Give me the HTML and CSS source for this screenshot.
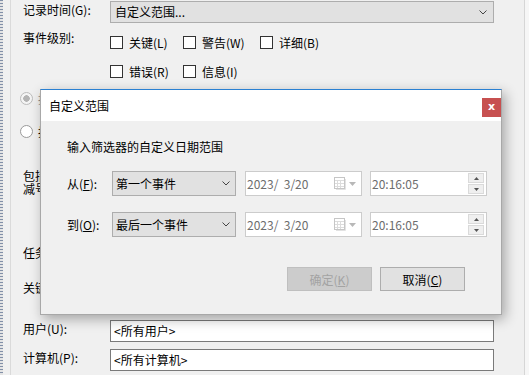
FILE: index.html
```html
<!DOCTYPE html>
<html lang="zh-CN">

<head>
    <meta charset="UTF-8">
    <title>筛选当前日志</title>
    <link rel="stylesheet" href="styles.css">
</head>

<body>
    <div class="screen">
        <div class="edge"></div>
        <div class="panel">
            <div class="field field-first">
                <span class="label">记录时间(G):</span>
                <div class="combo">
                    <span>自定义范围...</span>
                    <svg class="chevron" width="8" height="5" viewBox="0 0 8 5"><path d="M0.5 0.5L4 4L7.5 0.5" fill="none" stroke="#444"/></svg>
                </div>
            </div>

            <div class="field field-levels">
                <span class="label label-top">事件级别:</span>
                <div class="levels">
                    <label class="check"><span class="box"></span>关键(L)</label>
                    <label class="check"><span class="box"></span>警告(W)</label>
                    <label class="check"><span class="box"></span>详细(B)</label>
                    <label class="check"><span class="box"></span>错误(R)</label>
                    <label class="check"><span class="box"></span>信息(I)</label>
                </div>
            </div>

            <div class="radio-row radio-first"><span class="radio radio-off-state"></span>按日志(O)</div>
            <div class="radio-row radio-second"><span class="radio"></span>按源(S)</div>

            <p class="hint">包括/排除事件 ID: 输入 ID 号和/或 ID 范围，使用逗号分隔。若要排除条件，请先键入<br>减号。例如 1,3,5-99,-76</p>

            <div class="field field-task">
                <span class="label">任务类别(Y):</span>
                <div class="combo"><span></span></div>
            </div>
            <div class="field field-keyword">
                <span class="label">关键字(K):</span>
                <div class="combo"><span></span></div>
            </div>
            <div class="field field-user">
                <span class="label">用户(U):</span>
                <div class="textbox">&lt;所有用户&gt;</div>
            </div>
            <div class="field field-computer">
                <span class="label">计算机(P):</span>
                <div class="textbox">&lt;所有计算机&gt;</div>
            </div>
        </div>
        <div class="edge-right"></div>
    </div>

    <div class="dialog">
        <div class="dialog-title">
            <span>自定义范围</span>
            <div class="close">x</div>
        </div>
        <div class="dialog-body">
            <p class="intro">输入筛选器的自定义日期范围</p>

            <div class="range-row">
                <span class="range-label">从(<u>F</u>):</span>
                <div class="combo dlg-combo">
                    <span>第一个事件</span>
                    <svg class="chevron" width="8" height="5" viewBox="0 0 8 5"><path d="M0.5 0.5L4 4L7.5 0.5" fill="none" stroke="#444"/></svg>
                </div>
                <div class="picker date">
                    <span class="value">2023/  3/20</span>
                    <svg width="12" height="13" viewBox="0 0 12 13"><rect x="0.5" y="0.5" width="10" height="11" fill="#fff" stroke="#c6c6c6"/><path d="M1 3.5h9M1 6.5h9M1 9.5h9M3.5 4v7M6.5 4v7" stroke="#dcdcdc"/><path d="M11.5 2v10.5H2" fill="none" stroke="#e2e2e2"/></svg>
                    <svg class="drop" width="7" height="4" viewBox="0 0 7 4"><path d="M0 0h7L3.5 4z" fill="#b8b8b8"/></svg>
                </div>
                <div class="picker time">
                    <span class="value">20:16:05</span>
                    <div class="spin">
                        <div class="spin-btn"><svg width="5" height="3" viewBox="0 0 5 3"><path d="M0 3h5L2.5 0z" fill="#555"/></svg></div>
                        <div class="spin-btn"><svg width="5" height="3" viewBox="0 0 5 3"><path d="M0 0h5L2.5 3z" fill="#555"/></svg></div>
                    </div>
                </div>
            </div>

            <div class="range-row">
                <span class="range-label">到(<u>O</u>):</span>
                <div class="combo dlg-combo">
                    <span>最后一个事件</span>
                    <svg class="chevron" width="8" height="5" viewBox="0 0 8 5"><path d="M0.5 0.5L4 4L7.5 0.5" fill="none" stroke="#444"/></svg>
                </div>
                <div class="picker date">
                    <span class="value">2023/  3/20</span>
                    <svg width="12" height="13" viewBox="0 0 12 13"><rect x="0.5" y="0.5" width="10" height="11" fill="#fff" stroke="#c6c6c6"/><path d="M1 3.5h9M1 6.5h9M1 9.5h9M3.5 4v7M6.5 4v7" stroke="#dcdcdc"/><path d="M11.5 2v10.5H2" fill="none" stroke="#e2e2e2"/></svg>
                    <svg class="drop" width="7" height="4" viewBox="0 0 7 4"><path d="M0 0h7L3.5 4z" fill="#b8b8b8"/></svg>
                </div>
                <div class="picker time">
                    <span class="value">20:16:05</span>
                    <div class="spin">
                        <div class="spin-btn"><svg width="5" height="3" viewBox="0 0 5 3"><path d="M0 3h5L2.5 0z" fill="#555"/></svg></div>
                        <div class="spin-btn"><svg width="5" height="3" viewBox="0 0 5 3"><path d="M0 0h5L2.5 3z" fill="#555"/></svg></div>
                    </div>
                </div>
            </div>

            <div class="buttons">
                <button class="btn btn-disabled">确定(<u>K</u>)</button>
                <button class="btn">取消(<u>C</u>)</button>
            </div>
        </div>
    </div>
</body>

</html>
```

FILE: styles.css
```css
* {
    box-sizing: border-box;
}

body {
    margin: 0;
    width: 529px;
    height: 375px;
    overflow: hidden;
    background-color: #f0f0f0;
    font-family: "Noto Sans CJK SC", "Noto Sans", sans-serif;
    font-size: 12px;
    color: #000;
}

.screen {
    display: flex;
    height: 375px;
}

.edge {
    width: 3px;
    background: repeating-linear-gradient(to bottom, #8290a8 0 1px, #e4e4e4 1px 3px);
}

.panel {
    width: 515px;
    margin-left: 7px;
    padding: 1px 0 0 12px;
    border-left: 1px solid #dadada;
    border-right: 1px solid #d6d6d6;
    overflow: hidden;
}

.edge-right {
    flex: 1;
    background-color: #f6f6f6;
}

/* form rows behind the dialog */
.field {
    display: grid;
    grid-template-columns: 87px 384px;
    align-items: center;
}

.label {
    line-height: 16px;
    padding-bottom: 4px;
    white-space: nowrap;
}

.label-top {
    align-self: start;
    margin-top: -6px;
}

.combo {
    height: 22px;
    display: flex;
    align-items: center;
    justify-content: space-between;
    padding: 0 6px 0 4px;
    background-color: #e1e1e1;
    border: 1px solid #adadad;
    line-height: 16px;
}

.textbox {
    height: 22px;
    padding-left: 3px;
    line-height: 20px;
    background-color: #fff;
    border: 1px solid #7a7a7a;
}

.field-levels {
    margin-top: 13px;
}

.levels {
    display: grid;
    grid-template-columns: 67px 71px max-content;
    column-gap: 6px;
    row-gap: 16px;
}

.check {
    display: flex;
    align-items: center;
    gap: 6px;
    height: 13px;
    line-height: 16px;
    white-space: nowrap;
}

.box {
    width: 13px;
    height: 13px;
    border: 1px solid #333;
    background-color: #fff;
}

.radio-row {
    display: flex;
    align-items: center;
    gap: 5px;
    height: 13px;
    margin-left: -3px;
    white-space: nowrap;
    color: #8a8a8a;
}

.radio-first {
    margin-top: 14px;
}

.radio-second {
    margin-top: 20px;
    color: #000;
}

.radio {
    flex: none;
    width: 13px;
    height: 13px;
    border-radius: 50%;
    border: 1px solid #9a9a9a;
    background-color: #fff;
}

.radio-off-state {
    border-color: #bcbcbc;
    background: radial-gradient(circle, #b4b4b4 0 3px, #f4f4f4 3.5px);
}

/* only the start of this note shows beside the dialog */
.hint {
    width: 17px;
    margin: 31px 0 0;
    line-height: 13px;
    white-space: nowrap;
    overflow: hidden;
}

.field-task {
    margin-top: 49px;
}

.field-keyword {
    margin-top: 13px;
}

.field-user {
    margin-top: 19px;
}

.field-computer {
    margin-top: 7px;
}

/* dialog window */
.dialog {
    position: absolute;
    left: 40px;
    top: 89px;
    width: 462px;
    height: 226px;
    background-color: #f0f0f0;
    border: 1px solid #a8a8a8;
    border-top-color: #2a80d2;
    box-shadow: 3px 4px 12px rgba(0, 0, 0, 0.32);
}

.dialog-title {
    height: 31px;
    display: flex;
    justify-content: space-between;
    align-items: flex-start;
    padding-left: 8px;
    background-color: #fff;
    line-height: 31px;
}

.close {
    width: 19px;
    height: 19px;
    margin-top: 8px;
    background-color: #c75050;
    color: #fff;
    font-family: "DejaVu Sans", sans-serif;
    font-weight: bold;
    font-size: 11px;
    line-height: 17px;
    text-align: center;
}

.dialog-body {
    padding: 0 14px 0 26px;
}

.intro {
    margin: 18px 0 0;
    line-height: 16px;
}

.range-row {
    display: flex;
    align-items: center;
    margin-top: 16px;
    height: 25px;
}

.range-label {
    width: 45px;
    line-height: 16px;
}

.dlg-combo {
    width: 124px;
    height: 25px;
    padding: 0 5px 0 3px;
    margin-right: 9px;
}

.picker {
    width: 117px;
    height: 25px;
    display: flex;
    align-items: center;
    background-color: #fff;
    border: 1px solid #cccccc;
    color: #6d6d6d;
    line-height: 16px;
}

.date {
    padding: 0 5px 0 1px;
    margin-right: 8px;
}

.value {
    flex: 1;
    white-space: pre;
}

.drop {
    margin-left: 3px;
}

.time {
    padding: 0 2px 0 1px;
}

.spin {
    display: flex;
    flex-direction: column;
    gap: 1px;
}

.spin-btn {
    width: 16px;
    height: 10px;
    display: flex;
    align-items: center;
    justify-content: center;
    background-color: #efefef;
    border: 1px solid #dadada;
}

.buttons {
    display: flex;
    justify-content: flex-end;
    gap: 8px;
    margin: 30px 22px 0 0;
}

.btn {
    width: 85px;
    height: 24px;
    padding: 0;
    font-family: inherit;
    font-size: 12px;
    color: #000;
    background-color: #e1e1e1;
    border: 1px solid #adadad;
}

.btn-disabled {
    color: #a3a3a3;
    background-color: #cccccc;
    border-color: #bfbfbf;
}
```
